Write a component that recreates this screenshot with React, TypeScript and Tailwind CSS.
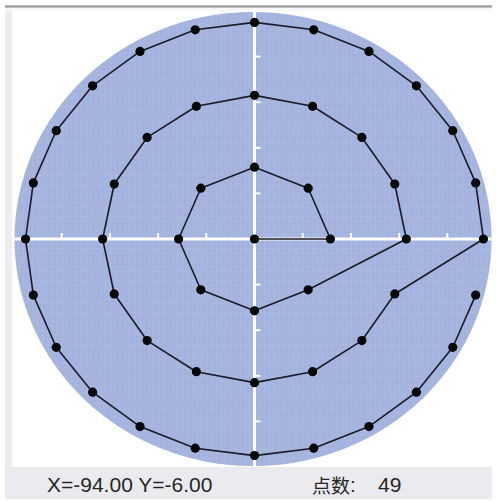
import React from 'react';

// chart geometry, in page pixels of the 496x501 shot
const CX = 254.5;
const CY = 239;
const SX = 2.41; // px per unit, horizontal
const SY = 2.28; // px per unit, vertical
const TICK = 20;

// svg sits at page (12, 11)
const OX = 12;
const OY = 11;

function toSvg(u: number, v: number): [number, number] {
  return [CX + u * SX - OX, CY - v * SY - OY];
}

function ring(r: number, n: number) {
  const pts: [number, number][] = [];
  for (let i = 0; i < n; i++) {
    const a = (i * 2 * Math.PI) / n;
    pts.push(toSvg(r * Math.cos(a), r * Math.sin(a)));
  }
  return pts;
}

const points: [number, number][] = [
  toSvg(0, 0),
  ...ring(31.5, 8),
  ...ring(63, 16),
  ...ring(95, 24),
];

function PolarChart() {
  const cx = CX - OX;
  const cy = CY - OY;
  const hTicks = [-4, -3, -2, -1, 1, 2, 3, 4].map((k) => cx + k * TICK * SX);
  const vTicks = [-4, -3, -2, -1, 1, 2, 3, 4].map((k) => cy + k * TICK * SY);

  return (
    <svg width={480} height={456} viewBox="0 0 480 456" className="block">
      <defs>
        <pattern id="fine" width={TICK * SX / 10} height={TICK * SY / 10} patternUnits="userSpaceOnUse" x={cx} y={cy}>
          <path
            d={`M0 0 H${TICK * SX / 10} M0 0 V${TICK * SY / 10}`}
            stroke="#b7c4e6"
            strokeWidth={0.7}
            fill="none"
          />
        </pattern>
        <clipPath id="disc">
          <ellipse cx={cx - 1.5} cy={cy} rx={238.5} ry={227} />
        </clipPath>
      </defs>

      <ellipse cx={cx - 1.5} cy={cy} rx={238.5} ry={227} fill="#a3b3de" />
      <g clipPath="url(#disc)">
        <rect x={0} y={0} width={480} height={456} fill="url(#fine)" opacity={0.7} />
        <line x1={0} y1={cy} x2={480} y2={cy} stroke="#ffffff" strokeWidth={3} />
        <line x1={cx} y1={0} x2={cx} y2={456} stroke="#ffffff" strokeWidth={3} />
      </g>

      {hTicks.map((x, i) => (
        <line key={`h${i}`} x1={x} y1={cy - 6} x2={x} y2={cy} stroke="#ffffff" strokeWidth={2} />
      ))}
      {vTicks.map((y, i) => (
        <line key={`v${i}`} x1={cx} y1={y} x2={cx + 6} y2={y} stroke="#ffffff" strokeWidth={2} />
      ))}

      <polyline
        points={points.map((p) => p.join(',')).join(' ')}
        fill="none"
        stroke="#1a1a28"
        strokeWidth={1.6}
        strokeLinejoin="round"
      />
      {points.map(([x, y], i) => (
        <circle key={i} cx={x} cy={y} r={4.6} fill="#050505" />
      ))}
    </svg>
  );
}

export default function App() {
  return (
    <div className="w-[496px] h-[501px] bg-white pt-[5px] pl-[5px] overflow-hidden">
      <div className="w-[487px]">
        <div className="h-[3px] bg-gradient-to-b from-[#c4c4c4] via-[#9e9e9e] to-[#cfcfcf]" />
        <div className="h-[3px] bg-[#f7f7f9]" />
        <div className="flex bg-[#ececf1] pl-[7px]">
          <div className="w-[480px] h-[456px] bg-white">
            <PolarChart />
          </div>
        </div>
        <div className="h-[32px] bg-[#ebebef] flex items-center pt-[3px] text-[#262626] font-['Liberation_Sans','Noto_Sans_CJK_SC',sans-serif] text-[21px] leading-none">
          <span className="ml-[42px] w-[265px]">X=-94.00 Y=-6.00</span>
          <span className="w-[66px] flex items-center">
            <span className="text-[19px] font-['Noto_Sans_CJK_SC',sans-serif]">点数</span>
            <span>:</span>
          </span>
          <span>49</span>
        </div>
      </div>
    </div>
  );
}
